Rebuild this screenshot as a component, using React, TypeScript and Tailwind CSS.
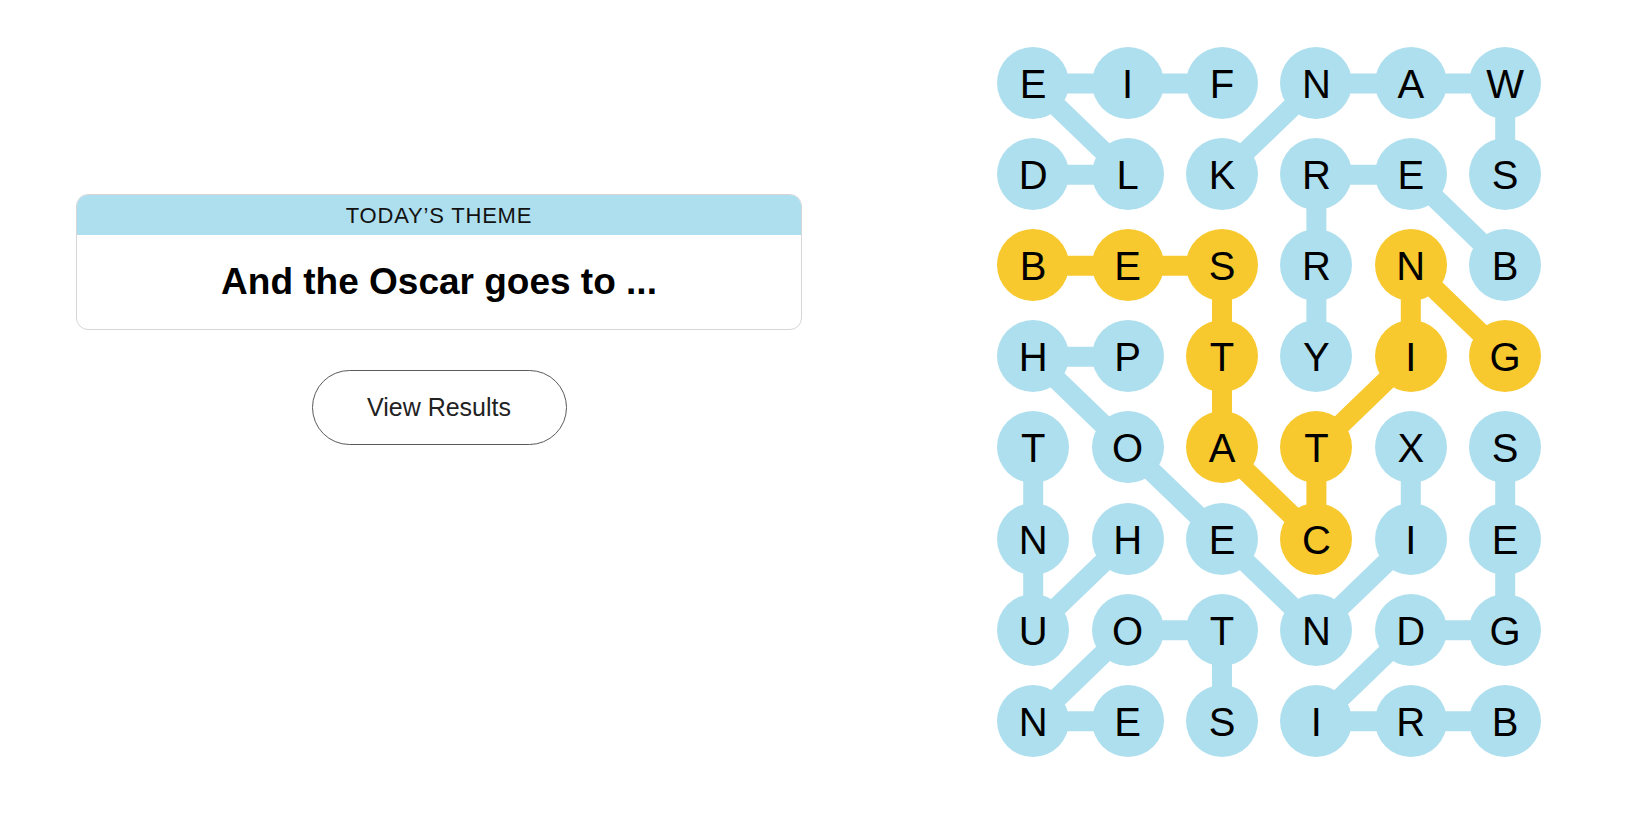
const board = [
  'EIFNAW',
  'DLKRES',
  'BESRNB',
  'HPTYIG',
  'TOATXS',
  'NHECIE',
  'UOTNDG',
  'NESIRB',
]

const COL = 94.4
const ROW = 91.1

// cells of the spangram
const spangram = ['2-0', '2-1', '2-2', '3-2', '4-2', '5-3', '4-3', '3-4', '2-4', '3-5']

// found words, as paths of [row, col]
const themeWords: number[][][] = [
  [[1, 0], [1, 1], [0, 0], [0, 1], [0, 2]], // FIELD
  [[1, 5], [0, 5], [0, 4], [0, 3], [1, 2]], // SWANK
  [[2, 5], [1, 4], [1, 3], [2, 3], [3, 3]], // BERRY
  [[3, 1], [3, 0], [4, 1], [5, 2], [6, 3], [5, 4], [4, 4]], // PHOENIX
  [[5, 1], [6, 0], [5, 0], [4, 0]], // HUNT
  [[7, 5], [7, 4], [7, 3], [6, 4], [6, 5], [5, 5], [4, 5]], // BRIDGES
  [[7, 2], [6, 2], [6, 1], [7, 0], [7, 1]], // STONE
]
const spangramPath = [[2, 0], [2, 1], [2, 2], [3, 2], [4, 2], [5, 3], [4, 3], [3, 4], [2, 4], [3, 5]]

const cx = (c: number) => COL / 2 + c * COL
const cy = (r: number) => ROW / 2 + r * ROW

const pathD = (path: number[][]) =>
  path.map(([r, c], i) => `${i === 0 ? 'M' : 'L'}${cx(c)} ${cy(r)}`).join(' ')

const ThemeCard = () => (
  <div className="w-[726px]">
    <div className="rounded-[12px] border border-[#d6d6d6] overflow-hidden">
      <div className="h-[40px] bg-[#aedfee] flex items-center justify-center text-[22px] tracking-[0.8px] text-[#121212] uppercase">
        Today’s Theme
      </div>
      <div className="h-[94px] flex items-center justify-center text-[37px] font-bold text-black">
        And the Oscar goes to ...
      </div>
    </div>
    <div className="flex justify-center mt-[40px]">
      <button className="w-[255px] h-[75px] rounded-full border-[1.5px] border-[#5a5a5a] bg-white text-[25px] text-[#222]">
        View Results
      </button>
    </div>
  </div>
)

const Board = () => (
  <div className="relative w-[566.4px] h-[728.8px]">
    <svg className="absolute inset-0" width="566.4" height="728.8">
      {themeWords.map((p, i) => (
        <path key={i} d={pathD(p)} fill="none" stroke="#aedfee" strokeWidth="20" strokeLinejoin="round" />
      ))}
      <path d={pathD(spangramPath)} fill="none" stroke="#f7c92f" strokeWidth="20" strokeLinejoin="round" />
    </svg>
    <div className="relative grid grid-cols-[repeat(6,94.4px)] grid-rows-[repeat(8,91.1px)]">
      {board.map((row, r) =>
        row.split('').map((ch, c) => {
          const yellow = spangram.includes(`${r}-${c}`)
          return (
            <div key={`${r}-${c}`} className="flex items-center justify-center">
              <div
                className={`w-[72px] h-[72px] rounded-full flex items-center justify-center text-[40px] leading-none text-black pt-[2px] ${yellow ? 'bg-[#f7c92f]' : 'bg-[#aedfee]'}`}
              >
                {ch}
              </div>
            </div>
          )
        })
      )}
    </div>
  </div>
)

export default function App() {
  return (
    <div className="min-h-screen w-full bg-white flex" style={{ fontFamily: '"Liberation Sans", Arial, sans-serif' }}>
      <div className="w-[986px] shrink-0 pl-[76px] pt-[194px]">
        <ThemeCard />
      </div>
      <div className="pt-[37.5px]">
        <Board />
      </div>
    </div>
  )
}
